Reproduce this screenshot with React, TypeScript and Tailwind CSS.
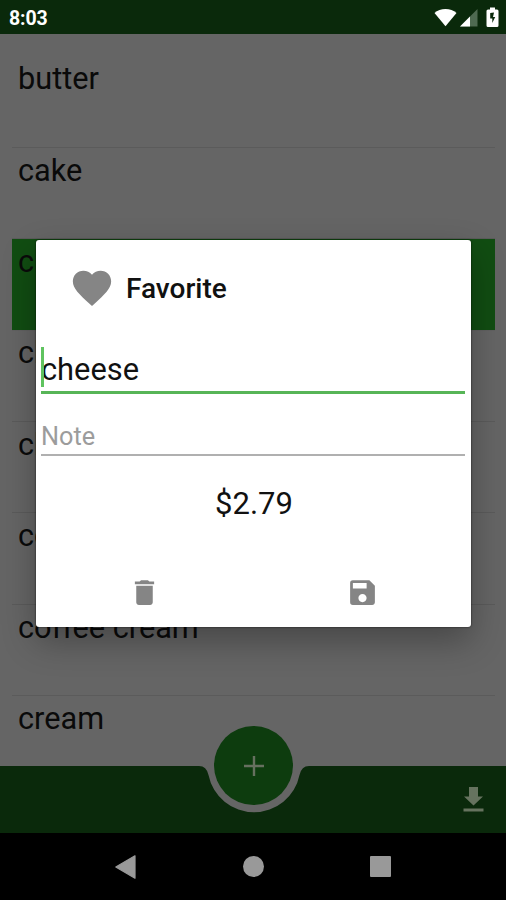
import { useState } from "react";
import clsx from "clsx";
import { MdDelete, MdFavorite, MdSave } from "react-icons/md";

const items = [
  { name: "butter" },
  { name: "cake" },
  { name: "cheese", selected: true },
  { name: "chicken" },
  { name: "chocolate" },
  { name: "coffee" },
  { name: "coffee cream" },
  { name: "cream" },
];

function StatusBar() {
  return (
    <header className="flex h-[34px] shrink-0 items-center justify-between bg-[#0a290b] pl-[9px] pr-[7px] text-white">
      <span className="text-[19.5px] font-bold leading-none tracking-[-0.1px] pt-[3px]">8:03</span>
      <div className="flex items-center">
        {/* Wifi */}
        <svg className="h-[19px] w-[23px]" viewBox="0 0 23 19">
          <path d="M.5 5C6-.3 17-.3 22.500 5L11.500 18.300z" fill="#fff" />
        </svg>
        {/* Signal */}
        <svg className="ml-[3px] h-[19px] w-[18px]" viewBox="0 0 18 19">
          <path d="M0 18.500 17.500 1v17.500z" fill="#4f6a51" />
          <path d="M0 18.500 10 8.500v10z" fill="#fff" />
        </svg>
        {/* Battery */}
        <svg className="ml-[8px] h-[21px] w-[13px]" viewBox="0 0 13 21">
          <path d="M4 .5h5v2h2q1.500 0 1.500 1.500v14.500q0 1.500-1.500 1.500H2q-1.500 0-1.500-1.500V4q0-1.500 1.500-1.500h2z" fill="#fff" />
          <path d="M8 5.500 4.200 6v5.500h2.100v4.500l2.900-6H7z" fill="#0a290b" />
        </svg>
      </div>
    </header>
  );
}

function ItemList() {
  return (
    <ul className="h-[732px] shrink-0 overflow-hidden pl-3 pr-[11px] pt-[22.4px]">
      {items.map((item) => (
        <li
          key={item.name}
          className={clsx(
            "h-[91.4px] border-b pl-[6px] pt-[4.9px] text-[30.7px] leading-[36px] text-[#0a0a0a]",
            item.selected ? "border-[#616161] bg-[#114d12] bg-clip-padding" : "border-[#5b5b5b]"
          )}
        >
          {item.name}
        </li>
      ))}
    </ul>
  );
}

function BottomBar() {
  return (
    <div className="relative flex h-[67px] shrink-0 items-center justify-end pr-[22px]">
      <svg className="absolute inset-0 h-[67px] w-[506px]" viewBox="0 0 506 67">
        <path
          d="M0 0H199Q206.500 0 208.500 9A46.400 46.400 0 0 0 299.500 9Q301.500 0 309 0H506V67H0z"
          fill="#0a290b"
        />
      </svg>
      <button className="absolute left-[214px] top-[-40px] flex size-[79px] items-center justify-center rounded-full bg-[#0d3c0e]">
        <svg className="size-5" viewBox="0 0 20 20">
          <path d="M10 0v20M0 10h20" stroke="#66705f" strokeWidth="2.400" />
        </svg>
      </button>
      <button className="relative">
        <svg className="h-[25px] w-[21px]" viewBox="0 0 21 25">
          <path d="M6 0h9v9.500h5L10.500 18.500 1 9.500h5zM.5 21.500h20v3H.5z" fill="#66735f" />
        </svg>
      </button>
    </div>
  );
}

function NavBar() {
  return (
    <nav className="flex h-[67px] items-center justify-between bg-black px-[115px]">
      <svg className="h-6 w-[21px]" viewBox="0 0 21 24">
        <path d="M.8 12 20 .8v22.400z" fill="#999" stroke="#999" strokeWidth="1.200" strokeLinejoin="round" />
      </svg>
      <span className="size-[21px] rounded-full bg-[#999]" />
      <span className="size-[21px] rounded-[1px] bg-[#999]" />
    </nav>
  );
}

function EditDialog() {
  const [name, setName] = useState("cheese");
  const [note, setNote] = useState("");

  return (
    <div className="absolute left-[36px] top-[240px] h-[387px] w-[435px] rounded-[3px] bg-white pl-[5px] pr-[6px] shadow-[0_0_2px_rgba(0,0,0,0.8),0_14px_34px_rgba(0,0,0,0.3)]">
      <div className="flex h-[97px] items-center pl-[28px] text-[#111]">
        <MdFavorite className="mb-[2px] size-[46px] text-[#858585]" />
        <span className="ml-[11px] pt-px text-[28px] font-medium">Favorite</span>
      </div>

      {/* Name */}
      <div className="relative mt-[10px] flex h-[47px] items-center border-b-[3px] border-[#57b557]">
        <span className="absolute left-0 top-0 h-[40px] w-[3px] bg-[#5fc35f]" />
        <input
          value={name}
          onChange={(e) => setName(e.target.value)}
          className="w-full bg-transparent pt-[2px] text-[30.8px] leading-[40px] text-[#111] outline-none"
        />
      </div>

      {/* Note */}
      <div className="mt-[20px] flex h-[42px] items-end border-b-2 border-[#b0b0b0]">
        <input
          value={note}
          onChange={(e) => setNote(e.target.value)}
          placeholder="Note"
          className="w-full bg-transparent text-[25.3px] leading-[34px] outline-none placeholder:text-[#9c9c9c]"
        />
      </div>

      <p className="mt-[29px] pl-[2px] text-center text-[31px] leading-[38px] text-[#111]">$2.79</p>

      {/* Actions */}
      <div className="-ml-[5px] -mr-[6px] mt-[53px] grid grid-cols-2 text-[#858585]">
        <button className="flex justify-center">
          <MdDelete className="size-[33px]" />
        </button>
        <button className="flex justify-center">
          <MdSave className="size-[33px]" />
        </button>
      </div>
    </div>
  );
}

export default function App() {
  return (
    <div className="relative flex h-[900px] w-[506px] flex-col overflow-hidden bg-[#656565] font-[Roboto,sans-serif]">
      <StatusBar />
      <ItemList />
      <BottomBar />
      <NavBar />
      <EditDialog />
    </div>
  );
}
